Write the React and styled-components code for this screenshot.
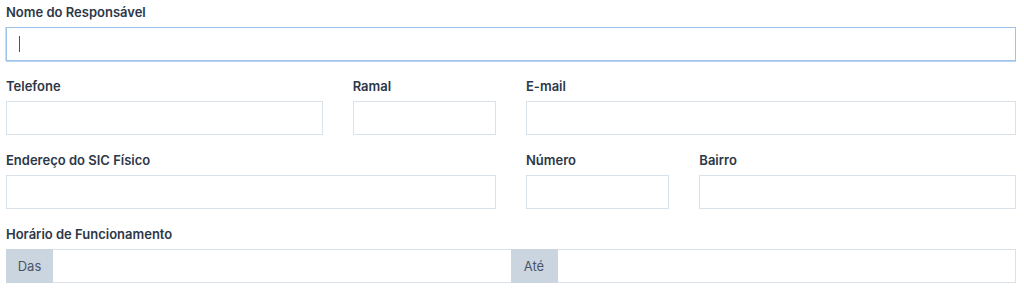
import React from "react";
import styled, { createGlobalStyle } from "styled-components";

const Global = createGlobalStyle`
  html, body { margin: 0; padding: 0; background: #ffffff; }
  body { font-family: Inter, Roboto, "Liberation Sans", Arial, sans-serif; }
  * { box-sizing: border-box; }
`;

const Form = styled.form`
  padding: 3px 8px 0 6px;
  display: flex;
  flex-direction: column;
  gap: 16px;
`;

const Row = styled.div`
  display: grid;
  grid-template-columns: repeat(12, 1fr);
  column-gap: 30px;
`;

const Field = styled.div`
  grid-column: span ${(p) => p.$span || 12};
  display: flex;
  flex-direction: column;
`;

const Label = styled.label`
  font-size: 13px;
  line-height: 19px;
  font-weight: 600;
  color: #2d3748;
  margin-bottom: 5px;
`;

const Input = styled.input`
  height: 34px;
  width: 100%;
  border: 1px solid ${(p) => (p.$focused ? "#9fc2ec" : "#d9e1ea")};
  box-shadow: ${(p) => (p.$focused ? "0 1px 0 0 #b8d3f3, -1px 0 0 0 #c9ddf5" : "none")};
  border-radius: 0;
  padding: 0 12px;
  font-family: inherit;
  font-size: 13px;
  color: #2d3748;
  background: #fff;
  outline: none;
`;

const Caret = styled.span`
  position: absolute;
  left: 13px;
  top: 9px;
  width: 1px;
  height: 16px;
  background: #4a5568;
`;

const InputWrap = styled.div`
  position: relative;
`;

const Group = styled.div`
  display: flex;
  height: 34px;
  border: 1px solid #d9e1ea;
  border-left: none;
`;

const Addon = styled.span`
  display: flex;
  align-items: center;
  justify-content: center;
  width: 47px;
  flex: 0 0 auto;
  background: #cbd5e0;
  color: #4a5568;
  font-size: 13px;
  margin: -1px 0;
`;

const GroupInput = styled.input`
  flex: 1 1 0;
  min-width: 0;
  border: none;
  outline: none;
  background: #fff;
  padding: 0 12px;
  font-family: inherit;
  font-size: 13px;
`;

export default function App() {
  return (
    <>
      <Global />
      <Form>
        <Row>
          <Field $span={12}>
            <Label>Nome do Responsável</Label>
            <InputWrap>
              <Input $focused />
              <Caret />
            </InputWrap>
          </Field>
        </Row>
        <Row>
          <Field $span={4}>
            <Label>Telefone</Label>
            <Input />
          </Field>
          <Field $span={2}>
            <Label>Ramal</Label>
            <Input />
          </Field>
          <Field $span={6}>
            <Label>E-mail</Label>
            <Input />
          </Field>
        </Row>
        <Row>
          <Field $span={6}>
            <Label>Endereço do SIC Físico</Label>
            <Input />
          </Field>
          <Field $span={2}>
            <Label>Número</Label>
            <Input />
          </Field>
          <Field $span={4}>
            <Label>Bairro</Label>
            <Input />
          </Field>
        </Row>
        <Row>
          <Field $span={12}>
            <Label>Horário de Funcionamento</Label>
            <Group>
              <Addon>Das</Addon>
              <GroupInput />
              <Addon>Até</Addon>
              <GroupInput />
            </Group>
          </Field>
        </Row>
      </Form>
    </>
  );
}
